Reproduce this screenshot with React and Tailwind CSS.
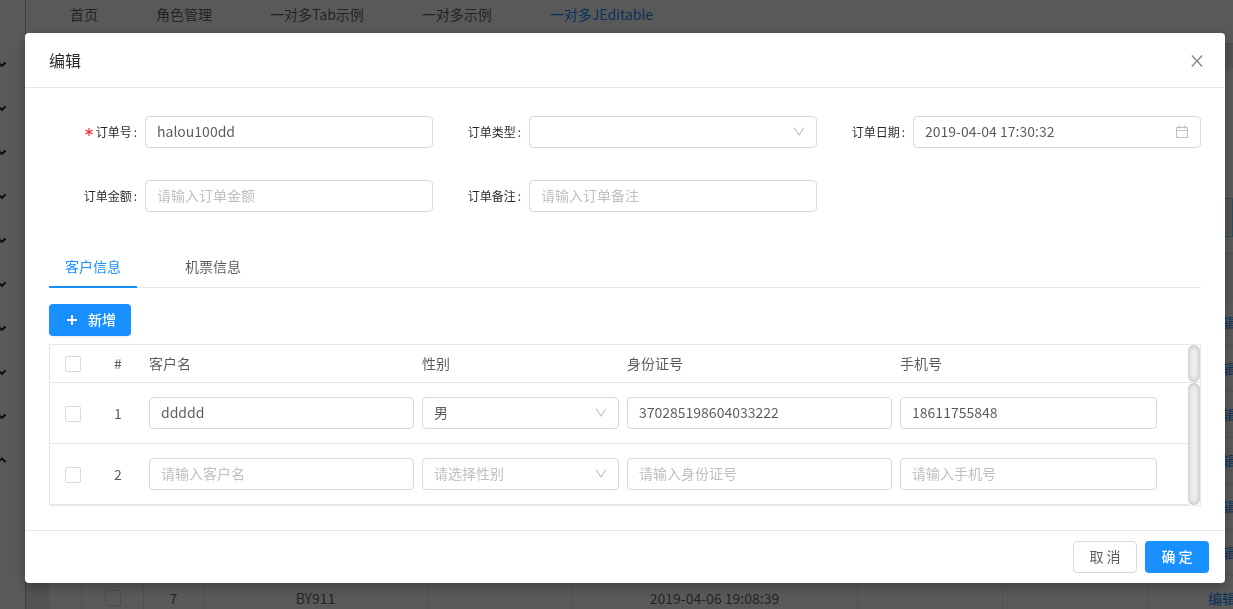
import { useState } from "react";

const pageTabs = ["首页", "角色管理", "一对多Tab示例", "一对多示例", "一对多JEditable"];

const orders = [
  {}, {}, {}, {}, {}, {},
  { index: 7, code: "BY911", date: "2019-04-06 19:08:39" },
];

const customers = [
  { name: "ddddd", sex: "男", idCard: "370285198604033222", phone: "18611755848" },
  { name: "", sex: "", idCard: "", phone: "" },
];

const inputClass =
  "block w-full h-8 px-[11px] pb-[2px] rounded border border-[#d9d9d9] bg-white text-sm text-black/65 placeholder:text-[#bfbfbf] outline-none focus:border-[#1890ff]";

const checkClass =
  "block w-4 h-4 appearance-none rounded-xs border border-[#d9d9d9] bg-white checked:bg-[#1890ff] checked:border-[#1890ff]";

const MenuArrow = ({ up }) => (
  <svg className="w-[6px] h-[6px]" viewBox="3 0 6 6" fill="none" stroke="#262626" strokeWidth="2">
    <path d={up ? "M1 5l4-3.4L8.6 5" : "M1 1.4l4 3.4 3.6-3.4"} />
  </svg>
);

const DownIcon = () => (
  <svg className="absolute right-3 top-[10px] w-3 h-3 pointer-events-none" viewBox="0 0 12 12" fill="none" stroke="#bfbfbf" strokeWidth="1.1">
    <path d="M1.2 1.8L6 9l4.8-7.2" />
  </svg>
);

const CalendarIcon = () => (
  <svg className="absolute right-3 top-[9px] w-[14px] h-[14px] pointer-events-none" viewBox="0 0 14 14" fill="none" stroke="#bfbfbf">
    <path d="M1.5 2.5h11v10h-11zM1.5 5.5h11M4.5 .5v3M9.5 .5v3" />
  </svg>
);

const SelectBox = ({ id, label, value, placeholder = "", options }) => {
  const [current, setCurrent] = useState(value);
  return (
    <div className="relative">
      <select id={id} aria-label={label} value={current} onChange={(e) => setCurrent(e.target.value)}
        className={`block w-full h-8 pl-[11px] pr-8 pb-[2px] appearance-none rounded border border-[#d9d9d9] bg-white text-sm outline-none focus:border-[#1890ff] ${current ? "text-black/65" : "text-[#bfbfbf]"}`}>
        <option value="">{placeholder}</option>
        {options.map((o) => <option key={o} value={o}>{o}</option>)}
      </select>
      <DownIcon />
    </div>
  );
};

const FormItem = ({ id, label, required, children }) => (
  <div className="flex items-center">
    <label htmlFor={id} className="w-1/4 pr-2 flex items-center justify-end text-xs text-black/85 whitespace-nowrap">
      {required && (
        <svg className="w-2 h-2 mr-[3px]" viewBox="0 0 8 8" stroke="#f5222d" strokeWidth="1.1">
          <path d="M4 0v8M.5 2l7 4M7.5 2l-7 4" />
        </svg>
      )}
      {label}<span className="pl-[2px]">:</span>
    </label>
    <div className="w-3/4 relative">{children}</div>
  </div>
);

const Background = () => (
  <div className="flex h-screen overflow-hidden bg-white text-sm text-black/65" aria-hidden="true" inert>
    <aside className="w-[25px] shrink-0 pt-[42px]">
      {[0, 1, 2, 3, 4, 5, 6, 7, 8, 9].map((i) => (
        <div key={i} className="h-11 flex items-center"><MenuArrow up={i === 9} /></div>
      ))}
    </aside>
    <div className="flex-1 min-w-0 border-l border-[#b5b5b5]">
      <nav className="h-11 pt-[3px] pl-11 flex gap-[58px] border-b border-[#d0d8de] leading-[22px] whitespace-nowrap">
        {pageTabs.map((t, i) => (
          <a key={t} href="#" className={i === 4 ? "text-[#1890ff]" : ""}>{t}</a>
        ))}
      </nav>
      <div className="pt-6 pl-[23px] bg-[#e4eaf0]">
        <div className="h-screen pt-[130px] pl-8 bg-white">
          <div className="h-[39px] mb-4 border border-[#91d5ff] bg-[#e6f7ff]" />
          <table className="w-[1216px] table-fixed border-collapse text-center">
            <colgroup>
              <col className="w-[62px]" />
              <col className="w-[60px]" />
              <col className="w-[224px]" />
              <col className="w-[144px]" />
              <col className="w-[286px]" />
              <col className="w-[145px]" />
              <col className="w-[145px]" />
              <col />
            </colgroup>
            <thead>
              <tr className="h-[46px] bg-[#fafafa]">
                <th colSpan={8} className="border border-[#e8e8e8]" />
              </tr>
            </thead>
            <tbody>
              {orders.map((o, i) => (
                <tr key={i} className="h-[46px] *:border *:border-[#e8e8e8] *:pb-[2px]">
                  <td><input type="checkbox" className={`${checkClass} mx-auto`} /></td>
                  <td>{o.index}</td>
                  <td>{o.code}</td>
                  <td />
                  <td>{o.date}</td>
                  <td />
                  <td />
                  <td className="pl-[60px] text-left"><a href="#" className="text-[#1890ff]">编辑</a></td>
                </tr>
              ))}
            </tbody>
          </table>
        </div>
      </div>
    </div>
  </div>
);

const CustomerTable = () => (
  <div className="mt-2 flex border border-[#e8e8e8] text-sm text-black/65">
    <table className="flex-1 w-full table-fixed border-separate border-spacing-0">
      <colgroup>
        <col className="w-[41px]" />
        <col className="w-[54px]" />
        <col className="w-[24%]" />
        <col className="w-[18%]" />
        <col className="w-[24%]" />
        <col />
      </colgroup>
      <thead>
        <tr className="h-[38px] text-left *:font-normal *:border-b *:border-[#e8e8e8]">
          <th className="pl-[15px]"><input type="checkbox" aria-label="全选" className={checkClass} /></th>
          <th className="pb-[2px] text-center">#</th>
          <th className="px-1 pb-[2px]">客户名</th>
          <th className="px-1 pb-[2px]">性别</th>
          <th className="px-1 pb-[2px]">身份证号</th>
          <th className="px-1 pb-[2px]">手机号</th>
        </tr>
      </thead>
      <tbody>
        {customers.map((c, i) => (
          <tr key={i} className="h-[61px] *:border-b *:border-[#e8e8e8]">
            <td className="pt-[2px] pl-[15px]"><input type="checkbox" aria-label={`选择 ${i + 1}`} className={checkClass} /></td>
            <td className="text-center">{i + 1}</td>
            <td className="px-1"><input aria-label="客户名" className={inputClass} placeholder="请输入客户名" defaultValue={c.name} /></td>
            <td className="px-1"><SelectBox label="性别" value={c.sex} placeholder="请选择性别" options={["男", "女"]} /></td>
            <td className="px-1"><input aria-label="身份证号" className={inputClass} placeholder="请输入身份证号" defaultValue={c.idCard} /></td>
            <td className="pl-1 pr-[31px]"><input aria-label="手机号" className={inputClass} placeholder="请输入手机号" defaultValue={c.phone} /></td>
          </tr>
        ))}
      </tbody>
    </table>
    {/* scroll tracks */}
    <div className="w-3 shrink-0 flex flex-col">
      <div className="h-[38px] border-b border-[#e8e8e8]">
        <div className="h-full rounded-full bg-[#ededed] shadow-[inset_0_0_5px_rgba(0,0,0,0.25)]" />
      </div>
      <div className="flex-1 rounded-full bg-[#ededed] shadow-[inset_0_0_5px_rgba(0,0,0,0.25)]" />
    </div>
  </div>
);

const EditModal = () => {
  const [tab, setTab] = useState(0);
  return (
    <div role="dialog" aria-labelledby="modal-title" className="mt-[33px] ml-[25px] mr-2 rounded bg-white shadow-[0_4px_12px_rgba(0,0,0,0.3)]">
      <header className="flex items-center justify-between px-6 py-4 border-b border-[#e8e8e8]">
        <h1 id="modal-title" className="text-base leading-[22px] text-black/85">编辑</h1>
        <button type="button" aria-label="关闭" className="-mr-[2px] pt-[2px]">
          <svg className="w-3 h-3" viewBox="0 0 12 12" fill="none" stroke="#8c8c8c" strokeWidth="1.4">
            <path d="M.8.4l10.4 11.2M11.2.4L.8 11.6" />
          </svg>
        </button>
      </header>

      <div className="px-6 pt-7 pb-6">
        <form className="grid grid-cols-3 gap-y-8">
          <FormItem id="code" label="订单号" required>
            <input id="code" className={inputClass} defaultValue="halou100dd" />
          </FormItem>
          <FormItem id="type" label="订单类型">
            <SelectBox id="type" value="" options={["国内订单", "国际订单"]} />
          </FormItem>
          <FormItem id="date" label="订单日期">
            <input id="date" className={inputClass} defaultValue="2019-04-04 17:30:32" />
            <CalendarIcon />
          </FormItem>
          <FormItem id="money" label="订单金额">
            <input id="money" className={inputClass} placeholder="请输入订单金额" />
          </FormItem>
          <FormItem id="remark" label="订单备注">
            <input id="remark" className={inputClass} placeholder="请输入订单备注" />
          </FormItem>
        </form>

        <div role="tablist" className="mt-8 flex gap-8 border-b border-[#e8e8e8] text-sm">
          {["客户信息", "机票信息"].map((t, i) => (
            <button key={t} type="button" role="tab" aria-selected={tab === i} onClick={() => setTab(i)}
              className={`-mb-px h-11 px-4 pt-[2px] border-b-2 ${tab === i ? "text-[#1890ff] border-[#1890ff]" : "text-black/65 border-transparent"}`}>
              {t}
            </button>
          ))}
        </div>

        <button type="button" className="mt-4 h-8 px-[15px] pb-[2px] flex items-center gap-2 rounded bg-[#1890ff] text-white text-sm font-medium shadow-[0_2px_0_rgba(0,0,0,0.045)]">
          <svg className="w-4 h-4" viewBox="0 0 16 16" fill="none" stroke="currentColor" strokeWidth="2">
            <path d="M8 4v10M3 9h10" />
          </svg>
          新增
        </button>

        <CustomerTable />
      </div>

      <footer className="flex justify-end gap-2 px-4 py-[10px] border-t border-[#e8e8e8] text-sm">
        <button type="button" className="h-8 w-16 pb-[2px] rounded border border-[#d9d9d9] bg-white text-black/65">取 消</button>
        <button type="button" className="h-8 w-16 pb-[2px] rounded bg-[#1890ff] text-white font-medium">确 定</button>
      </footer>
    </div>
  );
};

export default function App() {
  return (
    <div className="relative font-['Noto_Sans_CJK_SC',sans-serif]">
      <Background />
      <div className="fixed inset-0 overflow-auto bg-black/65">
        <EditModal />
      </div>
    </div>
  );
}
